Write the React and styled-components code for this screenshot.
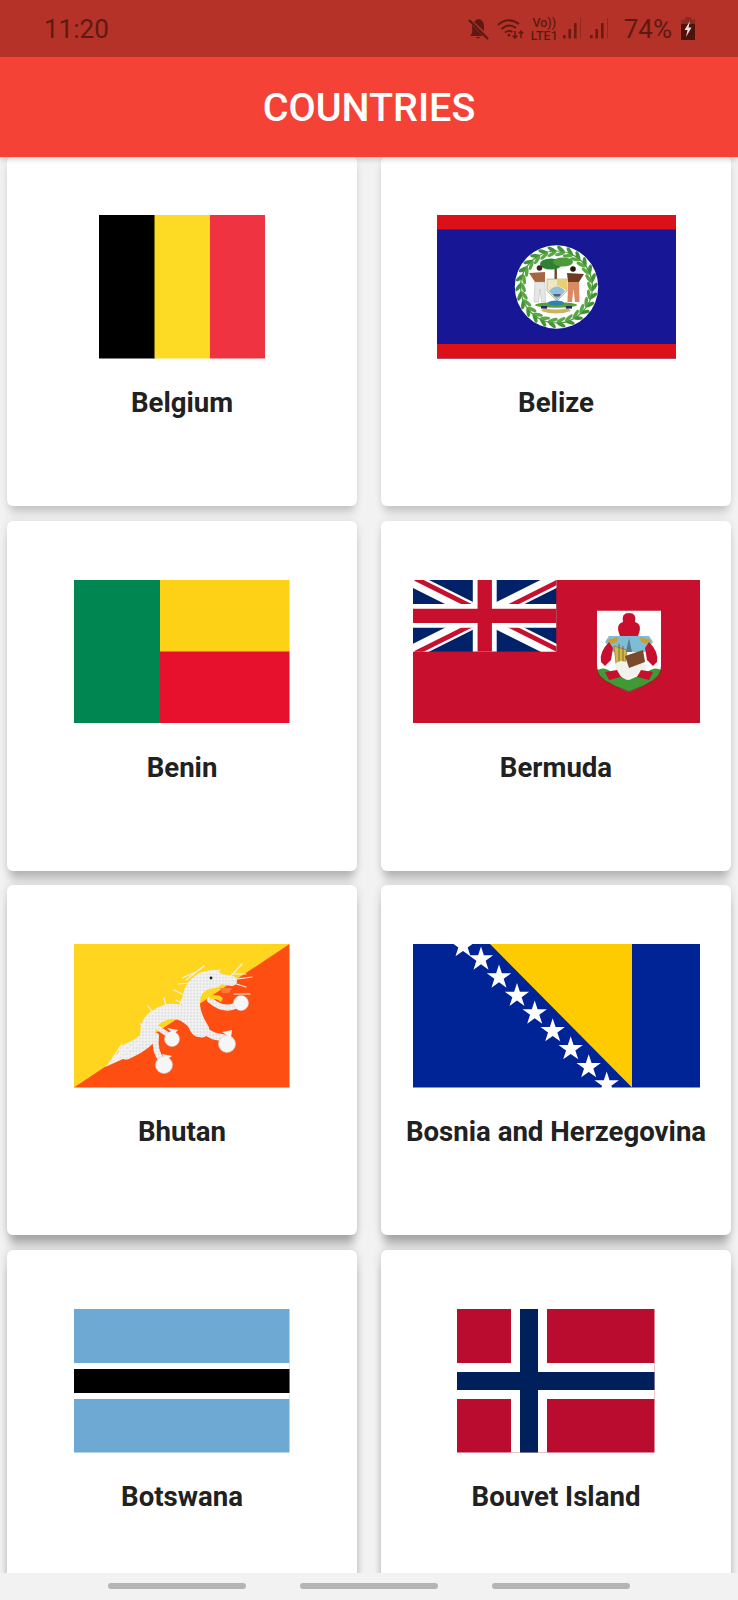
import React from "react";
import styled, { createGlobalStyle } from "styled-components";

const GlobalStyle = createGlobalStyle`
  html, body {
    margin: 0;
    padding: 0;
    background: #f2f2f2;
  }
`;

const Page = styled.div`
  width: 738px;
  height: 1600px;
  display: flex;
  flex-direction: column;
  overflow: hidden;
  background: #f2f2f2;
  font-family: Roboto, "Liberation Sans", sans-serif;
`;

const StatusBar = styled.div`
  height: 57px;
  flex: none;
  display: flex;
  align-items: center;
  justify-content: space-between;
  padding: 0 43px 0 44px;
  background: #b43228;
  color: #5e1a12;
  font-size: 26px;
  position: relative;
  z-index: 2;
`;

const StatusIcons = styled.div`
  display: flex;
  align-items: center;
`;

const Percent = styled.span`
  margin: 0 9px 0 16px;
`;

const VolteText = styled.div`
  width: 27px;
  margin: 0 5px 0 7px;
  font-size: 12.5px;
  line-height: 13px;
  font-weight: 500;
  text-align: center;
  white-space: nowrap;
`;

const MuteSvg = styled.svg`
  margin-right: 8px;
`;

const SignalSvg = styled.svg`
  & + & {
    margin-left: 9px;
  }
`;

const AppBar = styled.header`
  height: 100px;
  flex: none;
  display: flex;
  align-items: center;
  justify-content: center;
  background: #f44336;
  color: #fff;
  font-size: 39.5px;
  font-weight: 500;
  box-shadow: 0 2px 6px rgba(0, 0, 0, 0.2);
  position: relative;
  z-index: 1;
`;

const Grid = styled.main`
  flex: 1;
  min-height: 0;
  margin-top: -1px;
  padding: 0 7px;
  display: grid;
  grid-template-columns: 350px 350px;
  grid-auto-rows: 350px;
  column-gap: 24px;
  row-gap: 14.7px;
  overflow: hidden;
`;

// shadows get longer and darker further down the screen
const Card = styled.article`
  display: flex;
  flex-direction: column;
  align-items: center;
  padding-top: 59px;
  background: #fff;
  border-radius: 6px;
  box-shadow: 0 ${({ $row }) => 10 + $row * 1.5}px 8px -3px rgba(0, 0, 0, ${({ $row }) => 0.15 + $row * 0.055}),
    0 1px 8px rgba(0, 0, 0, ${({ $row }) => 0.08 + $row * 0.03});
`;

const Name = styled.h2`
  margin: 29.5px 0 0;
  font-size: 27.6px;
  line-height: 30px;
  font-weight: 700;
  color: #212121;
  white-space: nowrap;
`;

const FlagSvg = styled.svg`
  display: block;
  flex: none;
  height: 143.5px;
`;

const NavBar = styled.nav`
  height: 27px;
  flex: none;
  display: flex;
  justify-content: center;
  gap: 54px;
  padding-top: 10px;
  box-sizing: border-box;
  background: #f2f2f2;
  position: relative;
  z-index: 1;
`;

const NavPill = styled.span`
  width: 138px;
  height: 6px;
  border-radius: 3px;
  background: #b5b5b5;
`;

const Flag = ({ w, children }) => (
  <FlagSvg width={w} viewBox={`0 0 ${w} 143.5`} preserveAspectRatio="none">
    {children}
  </FlagSvg>
);

const Belgium = () => (
  <Flag w={166}>
    <rect width="56" height="143.5" fill="#000" />
    <rect x="55.5" width="56" height="143.5" fill="#fdda24" />
    <rect x="111" width="55" height="143.5" fill="#ef3340" />
  </Flag>
);

const wreathLeaves = Array.from({ length: 26 }, (_, i) => (i * 360) / 26);

const Belize = () => (
  <Flag w={239}>
    <rect width="239" height="143.5" fill="#171694" />
    <rect width="239" height="14.5" fill="#dc1018" />
    <rect y="129" width="239" height="14.5" fill="#dc1018" />
    <circle cx="119.5" cy="72" r="41.7" fill="#fff" />
    <circle cx="119.5" cy="72" r="36" fill="none" stroke="#4c9a3a" strokeWidth="1.2" />
    {wreathLeaves.map((a) => (
      <g key={a} transform={`rotate(${a} 119.5 72)`}>
        <ellipse cx="115" cy="34.6" rx="5" ry="1.9" fill="#3f9436" transform="rotate(30 115 34.6)" />
        <ellipse cx="115" cy="39" rx="5" ry="1.8" fill="#5aa845" transform="rotate(-30 115 39)" />
      </g>
    ))}
    <rect x="117.5" y="50" width="2.4" height="14" fill="#6b4a2a" />
    <ellipse cx="114" cy="49" rx="11" ry="5.5" fill="#2f7f35" />
    <ellipse cx="126" cy="47" rx="10" ry="4.5" fill="#4c9a3a" />
    <circle cx="102.5" cy="53" r="2.8" fill="#3d2418" />
    <path d="M92 58 L108 57 L108 67 H98 Z" fill="#a5673f" />
    <path d="M98 67 H108 L108.5 87 H104.5 L103 74 L101.5 87 H97 Z" fill="#e6e6e6" stroke="#a8a8a8" strokeWidth="0.4" />
    <circle cx="136" cy="54" r="2.8" fill="#2a140c" />
    <path d="M130 58 L147 59 L142 67 H131 Z" fill="#6e3a22" />
    <path d="M131 67 H142 L142.5 87 H138 L136.5 74 L135 87 H130.5 Z" fill="#d98a62" />
    <path d="M110 64 H130 V76 L120 86 L110 76 Z" fill="#f0e6c0" stroke="#8a8a70" strokeWidth="0.5" />
    <path d="M120 64 H130 V75 L120 70 Z" fill="#e8cf70" />
    <path d="M112 76 Q120 67 128 76 L120 85 Z" fill="#8fc0dc" />
    <path d="M116 79 H124 L122.5 81.5 H117.5 Z" fill="#55636e" />
    <ellipse cx="119" cy="90" rx="21" ry="2.8" fill="#57a032" />
    <ellipse cx="119" cy="88" rx="8" ry="2.6" fill="#2f7fb8" />
    <path d="M104 96 Q119 101 134 96 L131 93 Q119 96 107 93 Z" fill="#cdb35e" />
    <rect x="104" y="91" width="6" height="2.6" fill="#1e2a7a" />
    <rect x="129" y="91" width="6" height="2.6" fill="#1e2a7a" />
  </Flag>
);

const Benin = () => (
  <Flag w={215.5}>
    <rect width="86" height="143.5" fill="#008751" />
    <rect x="86" width="129.5" height="72" fill="#fcd116" />
    <rect x="86" y="71.5" width="129.5" height="72" fill="#e8112d" />
  </Flag>
);

const Bermuda = () => (
  <Flag w={287}>
    <rect width="287" height="143.5" fill="#c8102e" />
    <svg x="0" y="0" width="143.5" height="71.7" viewBox="0 0 60 30" preserveAspectRatio="none">
      <rect width="60" height="30" fill="#012169" />
      <path d="M0 0 L60 30 M60 0 L0 30" stroke="#fff" strokeWidth="6" />
      <path d="M0 0 L30 15 M60 30 L30 15" stroke="#c8102e" strokeWidth="2" transform="translate(1 -0.6)" />
      <path d="M60 0 L30 15 M0 30 L30 15" stroke="#c8102e" strokeWidth="2" transform="translate(1 0.6)" />
      <path d="M30 0 V30 M0 15 H60" stroke="#fff" strokeWidth="10" />
      <path d="M30 0 V30 M0 15 H60" stroke="#c8102e" strokeWidth="6" />
    </svg>
    <path d="M184 30.7 H248 V86 Q248 100 216 112 Q184 100 184 86 Z" fill="#fff" />
    <path d="M184 90 Q192 86 198 92 L216 100 L234 92 Q242 86 248 90 Q247 101 216 111.7 Q185 101 184 90 Z" fill="#3f9a35" />
    <path d="M216 111.7 Q247 101 248 90" fill="none" stroke="#7a1a1a" strokeWidth="0.8" />
    <path d="M184 90 Q185 101 216 111.7" fill="none" stroke="#7a1a1a" strokeWidth="0.8" />
    <path d="M196 56 H236 L240 62 L232 72 H200 L192 62 Z" fill="#7fbcd6" />
    <path d="M207 56 Q202 44 210 42 Q208 33 216 33 Q224 33 222 42 Q230 44 225 56 Z" fill="#c8102e" />
    <path d="M194 60 L205 57 L204 62 L198 64 Z" fill="#c8a030" />
    <path d="M238 60 L227 57 L228 62 L234 64 Z" fill="#c8a030" />
    <path d="M196 62 Q186 72 188 82 L192 86 L198 80 L200 68 Z" fill="#c8102e" />
    <path d="M236 62 Q246 72 244 82 L240 86 L234 80 L232 68 Z" fill="#c8102e" />
    <path d="M201 66 L214 70 L212 84 H203 Z" fill="#d4b84a" stroke="#7a6a2a" strokeWidth="0.6" />
    <path d="M206 64 V82 M210 66 V84" stroke="#6a5a2a" strokeWidth="0.8" />
    <path d="M216 58 L219 72 H213 Z" fill="#5a7a8c" />
    <path d="M202 84 Q208 78 216 84 Q228 78 234 86 Q232 96 222 96 L214 100 Q204 96 202 84 Z" fill="#f1f1ee" />
    <path d="M212 76 L230 70 L232 82 L216 88 Z" fill="#7a4a2c" />
    <path d="M192 92 L204 90 L208 97 L196 100 Z" fill="#c8102e" />
    <path d="M240 92 L228 90 L224 97 L236 100 Z" fill="#c8102e" />
  </Flag>
);

const Bhutan = () => (
  <Flag w={215.5}>
    <defs>
      <pattern id="scales" width="3.2" height="3.2" patternUnits="userSpaceOnUse">
        <rect width="3.2" height="3.2" fill="#f4f4f4" />
        <circle cx="1.6" cy="1.6" r="0.8" fill="none" stroke="#c4c4c4" strokeWidth="0.4" />
      </pattern>
    </defs>
    <rect width="215.5" height="143.5" fill="#ff4e12" />
    <path d="M0 143.5 V0 H215.5 Z" fill="#ffd520" />
    <g fill="none" stroke="url(#scales)" strokeLinecap="round" strokeLinejoin="round">
      <path d="M52 108 Q66 102 74 94 Q72 78 84 72 Q96 64 110 70 Q120 76 128 86" strokeWidth="15" />
      <path d="M42 114 L54 107" strokeWidth="6" />
      <path d="M125 84 Q112 62 120 46 Q126 36 140 35" strokeWidth="18" />
      <path d="M136 33 L158 37" strokeWidth="10" />
      <path d="M124 84 L140 92 L150 94" strokeWidth="7" />
      <path d="M136 56 Q150 68 163 61" strokeWidth="6" />
      <path d="M82 92 Q80 108 88 116" strokeWidth="6" />
      <path d="M84 84 L96 92" strokeWidth="5" />
    </g>
    <g fill="none" stroke="#f2f2f2" strokeWidth="1.2" strokeLinecap="round">
      <path d="M34 121 L48 100 M36 119 L56 98 M32 122 L52 113 M42 114 L66 98 M38 118 L60 110" />
      <path d="M155 34 L168 20 M155 36 L178 33 M156 38 L172 43 M160 50 L176 50 M158 30 L172 30" />
      <path d="M112 36 L130 22 M104 40 L128 38 M124 30 L146 26 M108 34 L124 27" />
      <path d="M74 84 L66 80 M80 70 L74 62 M92 62 L90 54 M106 62 L108 55" />
      <path d="M110 60 L102 56 M108 50 L100 46" />
    </g>
    <path d="M136 52 Q144 49 149 54 L147 58 Q141 53 136 56 Z" fill="#ffd520" />
    <path d="M146 44 L158 44 L155 49 L148 49 Z" fill="#ff7a3a" />
    <circle cx="137" cy="34" r="1.4" fill="#1c1c1c" />
    <g fill="#f6f6f6" stroke="#cfcfcf" strokeWidth="0.6">
      <circle cx="167" cy="59" r="7.5" />
      <circle cx="98" cy="95" r="7.5" />
      <circle cx="153" cy="100" r="8.5" />
      <circle cx="90" cy="121" r="8.5" />
    </g>
    <g fill="#f6f6f6">
      <path d="M93 84 L104 86 L100 90 Z" />
      <path d="M148 88 L158 86 L157 94 Z" />
      <path d="M88 110 L98 112 L92 116 Z" />
    </g>
  </Flag>
);

const starAt = (cx, cy, r) =>
  Array.from({ length: 10 }, (_, i) => {
    const rad = i % 2 ? r * 0.382 : r;
    const a = (i * Math.PI) / 5 - Math.PI / 2;
    return `${cx + rad * Math.cos(a)},${cy + rad * Math.sin(a)}`;
  }).join(" ");

const bosniaStars = [
  [50, 2],
  [68, 15.3],
  [86, 33.3],
  [104, 51.7],
  [121.7, 69.3],
  [139.7, 87],
  [157.7, 105],
  [175.7, 123],
  [193.7, 140.3],
];

const Bosnia = () => (
  <Flag w={287}>
    <rect width="287" height="143.5" fill="#002395" />
    <path d="M77 0 H219 V143.5 Z" fill="#fecb00" />
    {bosniaStars.map(([x, y]) => (
      <polygon key={x} points={starAt(x, y, 12.8)} fill="#fff" />
    ))}
  </Flag>
);

const Botswana = () => (
  <Flag w={215.5}>
    <rect width="215.5" height="143.5" fill="#6da9d2" />
    <rect y="54" width="215.5" height="36" fill="#fff" />
    <rect y="60" width="215.5" height="24" fill="#000" />
  </Flag>
);

const Bouvet = () => (
  <Flag w={197.5}>
    <rect width="197.5" height="143.5" fill="#ba0c2f" />
    <rect x="54" width="36" height="143.5" fill="#fff" />
    <rect y="54" width="197.5" height="36" fill="#fff" />
    <rect x="63" width="18" height="143.5" fill="#00205b" />
    <rect y="63" width="197.5" height="18" fill="#00205b" />
  </Flag>
);

const countries = [
  { name: "Belgium", flag: Belgium },
  { name: "Belize", flag: Belize },
  { name: "Benin", flag: Benin },
  { name: "Bermuda", flag: Bermuda },
  { name: "Bhutan", flag: Bhutan },
  { name: "Bosnia and Herzegovina", flag: Bosnia },
  { name: "Botswana", flag: Botswana },
  { name: "Bouvet Island", flag: Bouvet },
];

const MuteIcon = () => (
  <MuteSvg width="21" height="22" viewBox="0 0 21 22" fill="#5e1a12">
    <path d="M11 1 Q15 2 16 7 L16 13 L6 4 Q8 1 11 1 Z" />
    <path d="M4 7 L15 18 H2 Q5 15 4 11 Z" />
    <path d="M8 19 H12 Q10 22 8 19 Z" />
    <path d="M1 2 L20 21" stroke="#5e1a12" strokeWidth="2.4" />
  </MuteSvg>
);

const WifiIcon = () => (
  <svg width="27" height="21" viewBox="0 0 27 21" fill="none" stroke="#5e1a12" strokeWidth="1.9">
    <path d="M1 7 Q11 -2 22 6" />
    <path d="M4.5 11 Q11.5 4.5 19 10" />
    <path d="M8 14.5 Q11.5 11.5 15.5 14" />
    <circle cx="12" cy="17" r="1.5" fill="#5e1a12" stroke="none" />
    <path d="M18 13 V20 M15.6 17.6 L18 20.2 L20.4 17.6" strokeWidth="1.5" />
    <path d="M24 20 V13 M21.8 15.4 L24 13 L26.2 15.4" strokeWidth="1.5" />
  </svg>
);

const SignalIcon = () => (
  <SignalSvg width="18" height="21" viewBox="0 0 18 21" fill="#6a1c14">
    <rect x="0" y="17" width="2.6" height="3.4" />
    <rect x="5.4" y="11" width="2.6" height="9.4" />
    <rect x="11" y="5" width="2.6" height="15.4" />
    <rect x="17" y="0" width="1" height="20.4" opacity="0.45" />
  </SignalSvg>
);

const BatteryIcon = () => (
  <svg width="14" height="23" viewBox="0 0 14 23">
    <rect x="4" y="0" width="6" height="3" fill="#8a2a20" />
    <rect x="0" y="2.5" width="14" height="5" fill="#8a2a20" />
    <rect x="0" y="7" width="14" height="16" fill="#4d120c" />
    <path d="M9 4 L3.5 13 H6.5 L5 20 L10.5 10.5 H7.5 Z" fill="#f0dcd8" />
  </svg>
);

const App = () => {
  return (
    <Page>
      <GlobalStyle />
      <StatusBar>
        <span>11:20</span>
        <StatusIcons>
          <MuteIcon />
          <WifiIcon />
          <VolteText>
            Vo))
            <br />
            LTE1
          </VolteText>
          <SignalIcon />
          <SignalIcon />
          <Percent>74%</Percent>
          <BatteryIcon />
        </StatusIcons>
      </StatusBar>
      <AppBar>COUNTRIES</AppBar>
      <Grid>
        {countries.map(({ name, flag: FlagArt }, i) => (
          <Card key={name} $row={Math.floor(i / 2)}>
            <FlagArt />
            <Name>{name}</Name>
          </Card>
        ))}
      </Grid>
      <NavBar>
        <NavPill />
        <NavPill />
        <NavPill />
      </NavBar>
    </Page>
  );
};

export default App;
